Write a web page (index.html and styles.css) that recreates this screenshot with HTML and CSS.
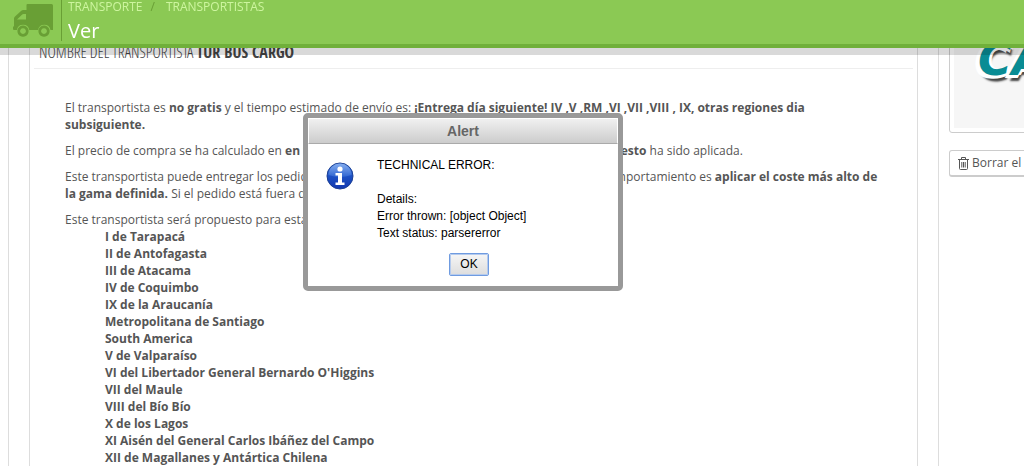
FILE: index.html
```
<!DOCTYPE html>
<html lang="es">
<head>
<meta charset="utf-8">
<title>Ver - Transportistas</title>
<link rel="stylesheet" href="styles.css">
</head>
<body>
<header class="page-head">
  <svg class="truck" viewBox="0 0 40 34" aria-hidden="true">
    <path fill-rule="evenodd" d="M14.500 1h24q1.500 0 1.500 1.500V27h-2.500a6.300 6.300 0 0 0-12.400 0h-8.800a6.300 6.300 0 0 0-12.400 0H1q-1 0-1-1v-2l1-1v-7.500q0-1 1-2l6-5.500q1-1 2.500-1h3V2q0-1 1-1zM4 16.500h9V11h-2.500q-.8 0-1.300.5z"/>
    <path fill-rule="evenodd" d="M10 22.500a5.600 5.600 0 1 0 .01 0zM10 25.200a2.900 2.900 0 1 1-.01 0zM31 22.500a5.600 5.600 0 1 0 .01 0zM31 25.200a2.900 2.900 0 1 1-.01 0z"/>
  </svg>
  <div class="head-text">
    <nav class="crumbs"><a href="#transporte">TRANSPORTE</a><span class="slash">/</span><a href="#transportistas">TRANSPORTISTAS</a></nav>
    <h1>Ver</h1>
  </div>
</header>

<main class="columns">
  <section class="wizard">
    <article class="summary">
      <h2>NOMBRE DEL TRANSPORTISTA <strong>TUR BUS CARGO</strong></h2>
      <div class="details">
        <p>El transportista es <strong>no gratis</strong> y el tiempo estimado de envío es: <strong>¡Entrega día siguiente! IV ,V ,RM ,VI ,VII ,VIII , IX, otras regiones dia subsiguiente.</strong></p>
        <p>El precio de compra se ha calculado en <strong>en función del peso</strong> y regla de impuestos <strong>Sin ningún impuesto</strong> ha sido aplicada.</p>
        <p>Este transportista puede entregar los pedidos de <strong>0.0 kg</strong> a <strong>100.00 kg</strong>. Si está fuera de la gama, el comportamiento es <strong>aplicar el coste más alto de la gama definida.</strong> Si el pedido está fuera de rango</p>
        <p>Este transportista será propuesto para estas zonas:</p>
        <ul>
          <li>I de Tarapacá</li>
          <li>II de Antofagasta</li>
          <li>III de Atacama</li>
          <li>IV de Coquimbo</li>
          <li>IX de la Araucanía</li>
          <li>Metropolitana de Santiago</li>
          <li>South America</li>
          <li>V de Valparaíso</li>
          <li>VI del Libertador General Bernardo O'Higgins</li>
          <li>VII del Maule</li>
          <li>VIII del Bío Bío</li>
          <li>X de los Lagos</li>
          <li>XI Aisén del General Carlos Ibáñez del Campo</li>
          <li>XII de Magallanes y Antártica Chilena</li>
        </ul>
      </div>
    </article>
  </section>
  <aside class="side">
    <div class="logo-frame"><div class="logo-box"><span class="logo">CA</span></div></div>
    <button class="delete" type="button">
      <svg viewBox="0 0 11 13" aria-hidden="true"><path d="M0 2.500h11M3.500 2V.5h4V2M1.500 3v8.500q0 1 1 1h6q1 0 1-1V3M3.800 5v5.500M5.500 5v5.500M7.200 5v5.500"/></svg>
      <span>Borrar el</span>
    </button>
  </aside>
</main>

<div class="alert" role="alertdialog" aria-labelledby="alert-title">
  <h2 id="alert-title">Alert</h2>
  <div class="alert-body">
    <svg class="info" viewBox="0 0 28 28" aria-hidden="true">
      <defs>
        <linearGradient id="ball" x1="0" y1="0" x2="0" y2="1"><stop offset="0" stop-color="#3d7be0"/><stop offset=".5" stop-color="#1c50c4"/><stop offset="1" stop-color="#1238b0"/></linearGradient>
        <linearGradient id="shine" x1="0" y1="0" x2="0" y2="1"><stop offset="0" stop-color="#b5d0fa"/><stop offset="1" stop-color="#3c74dc"/></linearGradient>
      </defs>
      <circle cx="14" cy="14" r="13" fill="url(#ball)" stroke="#1b3f94"/>
      <path d="M2.500 13a11.500 11.500 0 0 1 23 0q-6 2-11.500 2t-11.500-2z" fill="url(#shine)" opacity=".6"/>
      <circle cx="14" cy="7" r="2.600" fill="#fff"/>
      <path d="M9.500 11h6.500v9.500h2.500V23h-9v-2.500H12v-7H9.500z" fill="#fff"/>
    </svg>
    <p>TECHNICAL ERROR:<br><br>Details:<br>Error thrown: [object Object]<br>Text status: parsererror</p>
  </div>
  <div class="alert-actions"><button class="ok" type="button">OK</button></div>
</div>
</body>
</html>
```
FILE: styles.css
```
* { box-sizing: border-box; }

body {
  margin: 0;
  height: 100vh;
  overflow: hidden;
  background: #fff;
  color: #555;
  font: 12px/17px "Open Sans", sans-serif;
}

h1, h2, p, ul { margin: 0; padding: 0; font-weight: 400; }

.page-head {
  position: fixed;
  inset: 0 0 auto;
  z-index: 1;
  display: flex;
  padding-left: 13px;
  background: #8bc954;
  border-bottom: 4px solid #70b03a;
  box-shadow: 0 7px 0 rgba(0, 0, 0, .15);
}

.truck { width: 40px; height: 34px; margin: 3px 8px 0 0; fill: #699f35; }
.head-text { height: 41px; margin-bottom: 3px; border-left: 1px solid #699f35; }
.crumbs { display: flex; padding-left: 6px; line-height: 14px; }
.crumbs a { color: #cdf59f; text-decoration: none; }
.slash { padding: 0 11px 0 8px; color: #699f35; }

.page-head h1 { padding: 3px 0 0 6px; font-size: 20px; line-height: 28px; color: #fff; }

.columns { display: flex; }
.wizard {
  flex: 1;
  min-width: 0;
  margin-left: 8px;
  padding: 0 20px;
  border: solid #ddd;
  border-width: 0 1px;
}
.summary { padding: 42px 4px 0; border: solid #ddd; border-width: 0 1px; }
.summary h2 {
  padding: 0 5px 6px;
  border-bottom: 1px solid #eee;
  color: #444;
  font: 16px/20px "Open Sans Condensed Light", "Roboto Condensed", "Open Sans Condensed", "Liberation Sans", sans-serif;
}
.summary h2 strong { font-family: "Open Sans Condensed", "Liberation Sans", sans-serif; }
.details { padding: 30px 31px 0; }
.details p { margin-bottom: 9px; }
.details p:last-of-type { margin: 0; }
.details ul { padding-left: 40px; list-style: none; font-weight: 700; white-space: nowrap; }

.side { width: 85px; padding-left: 10px; overflow: hidden; }
.logo-frame {
  width: 160px;
  height: 133px;
  padding: 4px;
  border: 1px solid #ccc;
  border-radius: 3px;
}
.logo-box { height: 100%; padding: 34px 0 0 24px; background: #f6f6f6; }
.logo {
  font: italic 700 46px/40px "DejaVu Sans", sans-serif;
  color: #098c94;
  text-shadow: 3px 0 #fff, -4px 1px #fff, 0 3px #fff, -4px 3px #fff, 1px 6px 2px #444;
}
.delete {
  display: flex;
  align-items: center;
  gap: 3px;
  width: 160px;
  margin-top: 17px;
  padding: 3px 8px;
  border: 1px solid #ccc;
  border-bottom-width: 2px;
  border-radius: 3px;
  background: #fff;
  color: #555;
  font: 12px/18px "Open Sans", sans-serif;
}
.delete svg { width: 11px; height: 13px; fill: none; stroke: #555; }

.alert {
  position: fixed;
  top: 113px;
  left: 50%;
  z-index: 2;
  width: 320px;
  margin-left: -209px;
  padding-bottom: 10px;
  border: 5px solid #999;
  border-radius: 5px;
  background: #fff;
  color: #000;
  font: 12px/17px "Liberation Sans", Arial, sans-serif;
}
.alert h2 {
  border: 1px solid #fff;
  border-bottom-color: #aaa;
  background: linear-gradient(#f0f0f0, #ccc);
  color: #666;
  font-size: 14px;
  line-height: 24px;
  font-weight: 700;
  text-align: center;
}
.alert-body { display: flex; gap: 23px; padding: 13px 18px 11px; }
.info { width: 28px; height: 28px; margin-top: 5px; }
.alert-actions { display: flex; justify-content: center; padding-left: 12px; }
.ok {
  width: 40px;
  padding: 2px 0;
  border: 1px solid #6f9be0;
  border-radius: 2px;
  outline: 1px solid #b5cbee;
  outline-offset: -2px;
  background: linear-gradient(#f6f6f6, #ddd);
  color: #000;
  font: 12px/17px "Liberation Sans", Arial, sans-serif;
}
```
